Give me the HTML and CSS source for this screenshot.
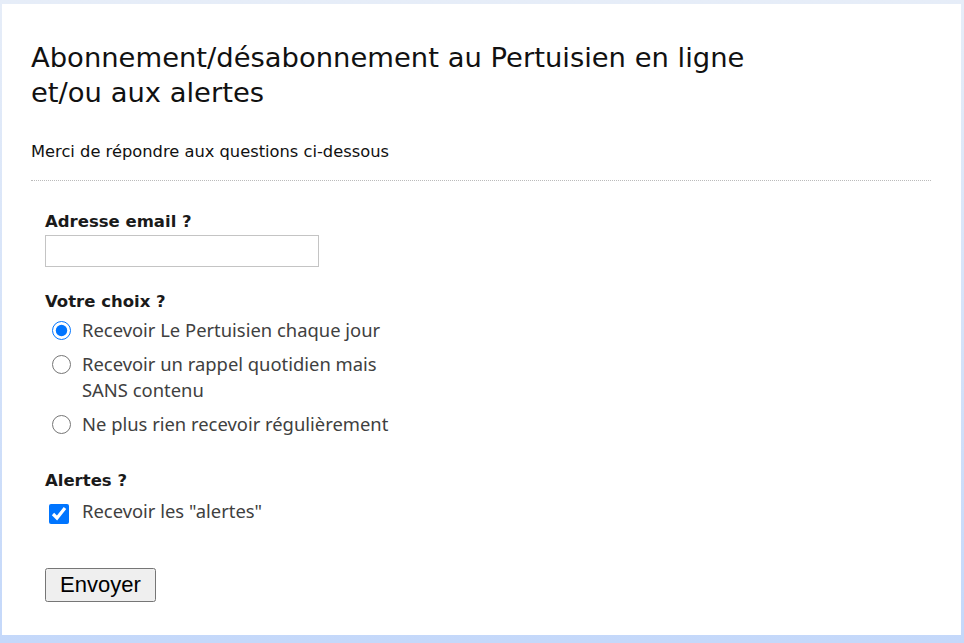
FILE: index.html
```html
<!DOCTYPE html>
<html lang="fr">
<head>
    <meta charset="UTF-8">
    <meta name="viewport" content="width=device-width, initial-scale=1.0">
    <title>Abonnement au Pertuisien en ligne</title>
    <link rel="stylesheet" href="styles.css">
</head>
<body>
    <div class="page">
        <h1>Abonnement/désabonnement au Pertuisien en ligne<br>et/ou aux alertes</h1>
        <p class="intro">Merci de répondre aux questions ci-dessous</p>
        <form class="subscribe" onsubmit="return false;">
            <div class="field">
                <label class="question" for="email">Adresse email ?</label>
                <input type="text" id="email" name="email">
            </div>
            <div class="field choices">
                <div class="question">Votre choix ?</div>
                <label class="option">
                    <input type="radio" name="choix" value="jour" checked>
                    <span>Recevoir Le Pertuisien chaque jour</span>
                </label>
                <label class="option">
                    <input type="radio" name="choix" value="rappel">
                    <span>Recevoir un rappel quotidien mais<br>SANS contenu</span>
                </label>
                <label class="option">
                    <input type="radio" name="choix" value="rien">
                    <span>Ne plus rien recevoir régulièrement</span>
                </label>
            </div>
            <div class="field">
                <div class="question">Alertes ?</div>
                <label class="option">
                    <input type="checkbox" name="alertes" checked>
                    <span>Recevoir les "alertes"</span>
                </label>
            </div>
            <button type="submit">Envoyer</button>
        </form>
    </div>
</body>
</html>
```

FILE: styles.css
```css
body {
    margin: 0;
    padding: 0;
    background: linear-gradient(#e6edf8, #c4d8fa);
    min-height: 643px;
    font-family: "DejaVu Sans", sans-serif;
}

.page {
    background-color: #ffffff;
    margin: 4px 3px 0 2px;
    height: 631px;
    box-sizing: border-box;
    padding: 36px 30px 0 29px;
}

h1 {
    font-family: "DejaVu Sans", sans-serif;
    font-weight: normal;
    font-size: 27.4px;
    line-height: 35px;
    color: #111;
    margin: 0;
}

.intro {
    font-size: 16.3px;
    color: #111;
    margin: 32px 0 0;
    padding-bottom: 19px;
    border-bottom: 1px dotted #bbb;
}

.subscribe {
    padding: 30px 14px 0;
}

.field {
    margin-bottom: 24px;
}

.field.choices {
    margin-bottom: 29px;
}

.question {
    display: block;
    font-weight: bold;
    font-size: 16.5px;
    line-height: 22px;
    color: #1a1a1a;
    margin-bottom: 2px;
}

.choices .question {
    margin-bottom: 0;
}

.subscribe input[type="text"] {
    width: 274px;
    height: 32px;
    box-sizing: border-box;
    border: 1px solid #c4c4c4;
    margin: 0;
}

.option {
    display: flex;
    align-items: flex-start;
    font-family: "Noto Sans", sans-serif;
    font-size: 18.4px;
    line-height: 26px;
    color: #404040;
    padding: 4px 0;
}

.option input {
    width: 19px;
    height: 19px;
    margin: 4px 11px 0 7px;
    flex-shrink: 0;
}

.option input[type="checkbox"] {
    width: 20px;
    height: 20px;
    margin: 6px 13px 0 4px;
}

button {
    font-family: "Liberation Sans", sans-serif;
    font-size: 22px;
    padding: 2px 13px;
    margin-top: 16px;
}
```
